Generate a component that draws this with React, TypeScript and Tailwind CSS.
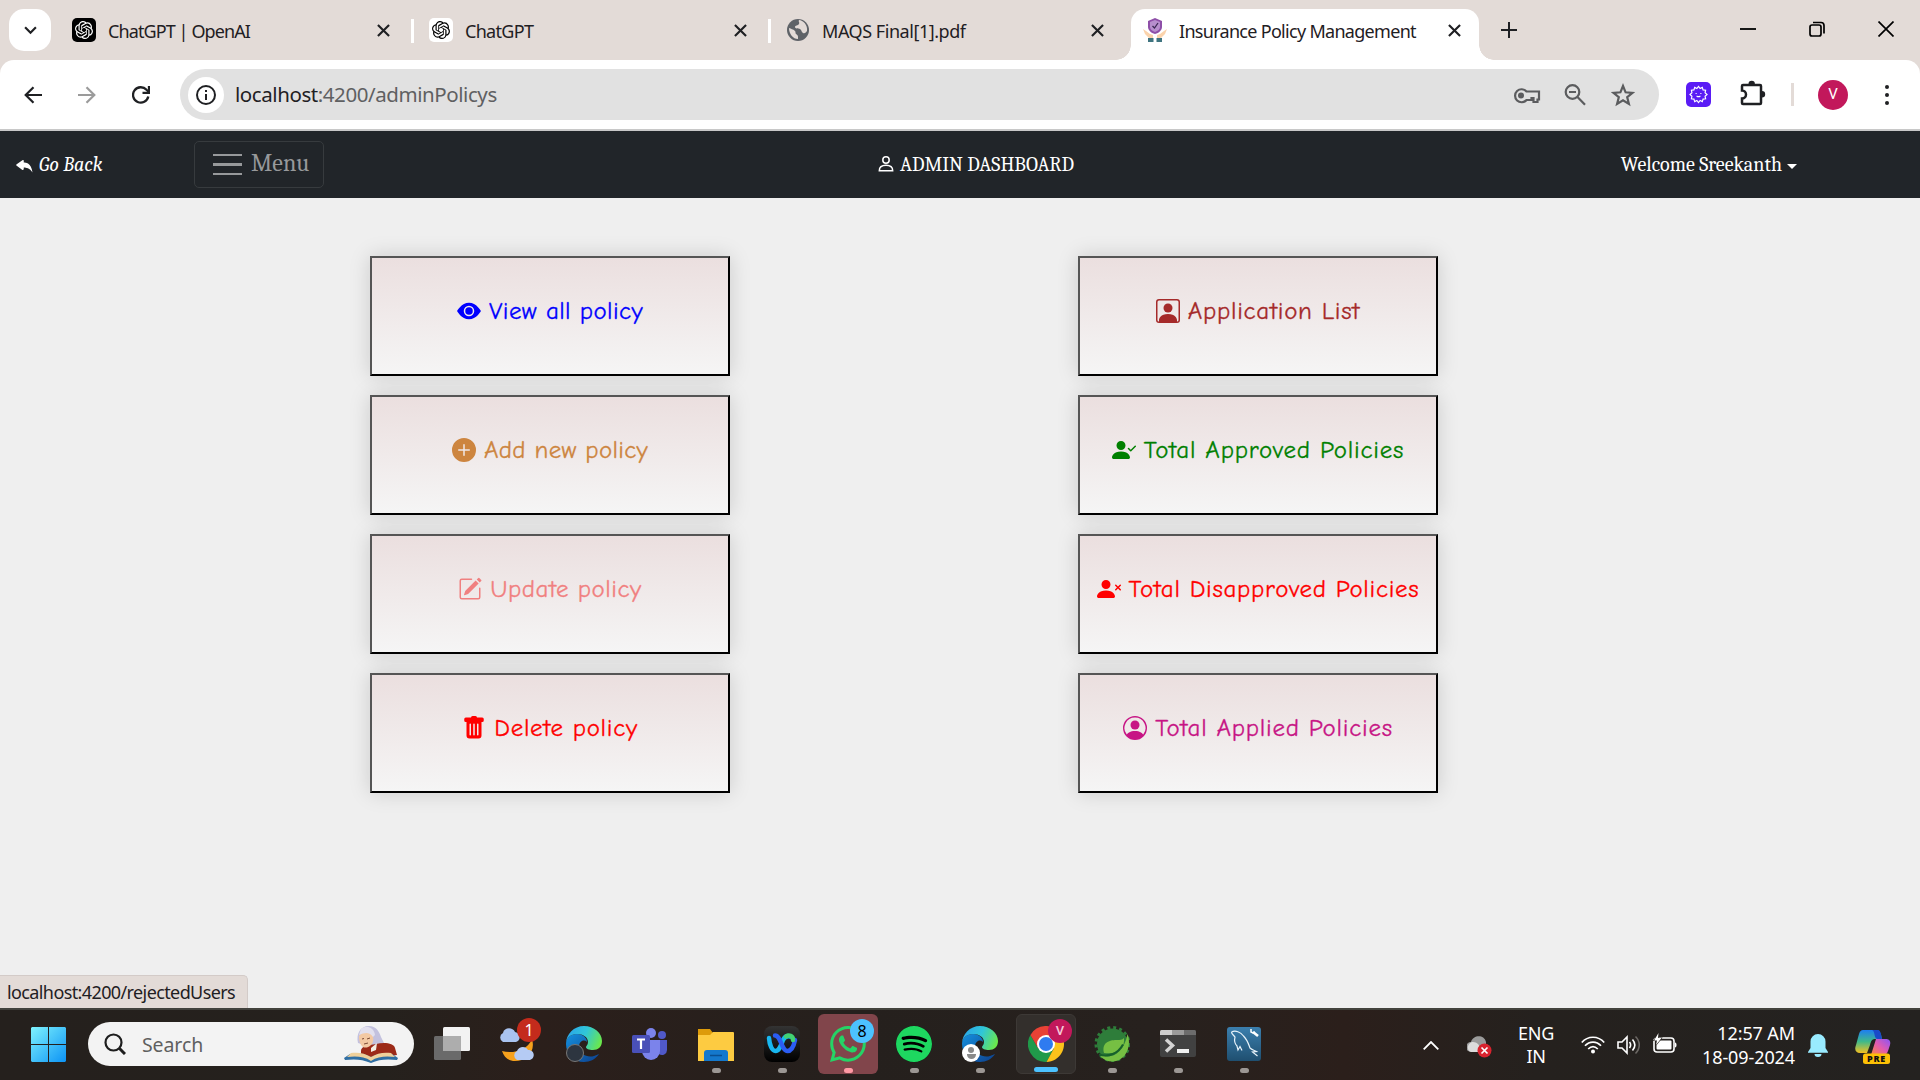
import React from "react";
import {
  BsEyeFill,
  BsPlusCircleFill,
  BsPencilSquare,
  BsTrashFill,
  BsPersonSquare,
  BsPersonCheckFill,
  BsPersonXFill,
  BsPersonCircle,
  BsReplyFill,
  BsWhatsapp,
} from "react-icons/bs";
import { SiOpenai, SiSpotify } from "react-icons/si";

type IconType = React.ComponentType<{ className?: string }>;

const UI = "font-['Noto_Sans','Open_Sans',sans-serif]";

/* ---------- Tab strip ---------- */

function CloseGlyph() {
  return (
    <svg viewBox="0 0 14 14" className="h-[13px] w-[13px]" fill="none" stroke="#1f2023" strokeWidth="2.3">
      <path d="M1 1l12 12M13 1L1 13" />
    </svg>
  );
}

function GlobeIcon() {
  return (
    <svg viewBox="0 0 24 24" className="h-6 w-6">
      <circle cx="12" cy="12" r="11" fill="#5f6368" />
      <path d="M3 10c2 1 4 1 6 3 1 1 0 2 1 3s2 1 2 3v2c-5 0-9-5-9-11z" fill="#e3dbd7" />
      <path d="M13 2c-1 2 1 2 0 4s-4 1-4 3 3 1 5 2 1 3 3 4 3-1 4-2c1-6-4-11-8-11z" fill="#e3dbd7" />
    </svg>
  );
}

function InsuranceIcon() {
  return (
    <svg viewBox="0 0 24 24" className="h-6 w-6">
      <path d="M12 0l7 3v6c0 3-3 6-7 7-4-1-7-4-7-7V3z" fill="#8e4fa8" />
      <path d="M12 2l5 2v5c0 2-2 4-5 5-3-1-5-3-5-5V4z" fill="#b78fcd" />
      <path d="M9.500 8l2 2 3.500-5" stroke="#3c2a55" strokeWidth="1.300" fill="none" />
      <path d="M0 11l3 2 4 3 3 1v3H6l-4-4zM24 11l-3 2-4 3-3 1v3h4l4-4z" fill="#fbd3ac" />
      <path d="M5 20h5.500v4H5zM13.500 20H19v4h-5.500z" fill="#3f7480" />
    </svg>
  );
}

function Tab({
  title,
  icon,
  active = false,
  separator = false,
  spacing,
}: {
  title: string;
  icon: React.ReactNode;
  active?: boolean;
  separator?: boolean;
  spacing: string;
}) {
  const shape = active ? "w-[348px] rounded-t-[14px] bg-white" : "w-[357px]";
  return (
    <div className={`relative flex h-[51px] shrink-0 items-start pt-[9px] pl-3 ${shape}`}>
      <div className="flex h-6 w-6 shrink-0 items-center justify-center">{icon}</div>
      <span className={`ml-3 w-[262px] text-[18px] leading-[27px] whitespace-nowrap text-[#1f2023] ${spacing}`}>{title}</span>
      <span className="mt-[6px] ml-[7px]">
        <CloseGlyph />
      </span>
      {separator && <span className="mt-[1px] ml-[21px] h-6 w-[3px] shrink-0 bg-white" />}
      {active && (
        <>
          <span className="absolute bottom-0 -left-[15px] h-[15px] w-[15px] bg-[radial-gradient(circle_at_0_0,#e3dbd7_14.500px,#ffffff_15px)]" />
          <span className="absolute -right-[15px] bottom-0 h-[15px] w-[15px] bg-[radial-gradient(circle_at_100%_0,#e3dbd7_14.500px,#ffffff_15px)]" />
        </>
      )}
    </div>
  );
}

function TabStrip() {
  return (
    <div className="flex h-[60px] bg-[#e3dbd7] pt-[9px]">
      <div className="ml-[9px] flex h-[42px] w-[42px] items-center justify-center rounded-[15px] bg-white">
        <svg viewBox="0 0 14 10" className="h-[9px] w-[13px]" fill="none" stroke="#1f2023" strokeWidth="2.400">
          <path d="M1 1.500l6 6 6-6" />
        </svg>
      </div>
      <div className="ml-[9px] flex">
        <Tab
          title="ChatGPT | OpenAI"
          separator
          spacing="tracking-[-0.9px]"
          icon={
            <span className="flex h-6 w-6 items-center justify-center rounded-[5px] bg-black text-white">
              <SiOpenai className="h-[18px] w-[18px]" />
            </span>
          }
        />
        <Tab
          title="ChatGPT"
          separator
          spacing="tracking-[-0.7px]"
          icon={
            <span className="flex h-6 w-6 items-center justify-center rounded-[5px] bg-white text-black">
              <SiOpenai className="h-[18px] w-[18px]" />
            </span>
          }
        />
        <Tab title="MAQS Final[1].pdf" spacing="tracking-[-0.45px]" icon={<GlobeIcon />} />
        <Tab title="Insurance Policy Management" active spacing="tracking-[-0.7px]" icon={<InsuranceIcon />} />
      </div>
      <svg viewBox="0 0 16 16" className="mt-[13px] ml-[22px] h-4 w-4" fill="none" stroke="#1f2023" strokeWidth="2">
        <path d="M8 0v16M0 8h16" />
      </svg>
      <div className="mt-3 ml-auto flex gap-[53px] pr-[26px]">
        <svg viewBox="0 0 16 16" className="h-4 w-4" stroke="#000" strokeWidth="1.800">
          <path d="M0 8h16" />
        </svg>
        <svg viewBox="0 0 16 16" className="h-4 w-4" fill="none" stroke="#000" strokeWidth="1.700">
          <rect x="1" y="4" width="11" height="11" rx="2" />
          <path d="M4 1.500h8a3 3 0 0 1 3 3v8" />
        </svg>
        <svg viewBox="0 0 16 16" className="h-4 w-4" fill="none" stroke="#000" strokeWidth="1.700">
          <path d="M.5.5l15 15M15.500.5l-15 15" />
        </svg>
      </div>
    </div>
  );
}

/* ---------- Address bar ---------- */

function Toolbar() {
  return (
    <div className="h-[71px] border-b-2 border-[#c8c8c8] bg-[#e3dbd7]">
      <div className="flex h-[69px] items-center rounded-t-[14px] bg-white">
        <svg viewBox="0 0 18 18" className="ml-6 h-[18px] w-[18px]" fill="none" stroke="#1f2023" strokeWidth="2.200">
          <path d="M18 9H2M9.500 1.200L1.700 9l7.800 7.800" />
        </svg>
        <svg viewBox="0 0 18 18" className="ml-9 h-[18px] w-[18px]" fill="none" stroke="#9b9b9b" strokeWidth="2.200">
          <path d="M0 9h16M8.500 1.200L16.300 9l-7.800 7.800" />
        </svg>
        <svg viewBox="0 0 18 18" className="ml-[36px] h-[18px] w-[18px]" fill="none" stroke="#1f2023" strokeWidth="2.300">
          <path d="M16.300 10.500A7.700 7.700 0 1 1 14.500 3.800L16.800 6" />
          <path d="M17 0v6.900h-6.500" />
        </svg>
        <div className="ml-[30px] flex h-[51px] w-[1479px] items-center rounded-full bg-[#e1e1e1] pl-2">
          <div className="flex h-9 w-9 items-center justify-center rounded-full bg-white">
            <svg viewBox="0 0 20 20" className="h-5 w-5" fill="none" stroke="#1f2023" strokeWidth="2">
              <circle cx="10" cy="10" r="9" />
              <path d="M10 9v6M10 5v2" />
            </svg>
          </div>
          <span className="ml-[11px] text-[20.500px] tracking-[-0.43px] whitespace-nowrap text-[#5f6062]">
            <span className="text-[#1f2023]">localhost</span>:4200/adminPolicys
          </span>
          <div className="mr-[24px] ml-auto flex items-center text-[#5b5c5e]">
            <svg viewBox="0 0 28 20" className="h-5 w-7" fill="none" stroke="currentColor" strokeWidth="2.200">
              <path d="M13.500 6.500H26v8h-1.500v2.500h-4V13h-2v2h-5a6.500 6.500 0 1 1 0-8.500z" />
              <circle cx="8" cy="10.500" r="3" fill="currentColor" stroke="none" />
            </svg>
            <svg viewBox="0 0 22 22" className="ml-[23px] h-[22px] w-[22px]" fill="none" stroke="currentColor" strokeWidth="2.200">
              <circle cx="8.500" cy="8" r="6.800" />
              <path d="M13.500 13l7.500 7.800M5 8h7" />
            </svg>
            <svg viewBox="0 0 24 24" className="ml-[25px] h-6 w-6" fill="none" stroke="currentColor" strokeWidth="2.200">
              <path d="M12 3l2.600 6.300 6.900.5-5.300 4.400 1.700 6.700-5.900-3.600-5.900 3.600 1.700-6.700-5.300-4.400 6.900-.5z" />
            </svg>
          </div>
        </div>
        <div className="ml-[27px] flex h-[25px] w-[25px] items-center justify-center rounded-[5px] bg-[#5a1cf5]">
          <svg viewBox="0 0 20 20" className="h-[19px] w-[19px]" fill="none" stroke="#fff" strokeWidth="1.200">
            <path d="M10 1.500l1.700 2.200L14 2.500l.8 2.700 2.700.3-.6 2.700 2.100 1.800-2.100 1.800.6 2.700-2.700.3-.8 2.700-2.300-1.200L10 18.500l-1.700-2.200L6 17.500l-.8-2.700-2.700-.3.600-2.700L1 10l2.100-1.800-.6-2.700 2.700-.3L6 2.500l2.300 1.200z" />
            <path d="M7.500 8.500v1M12.500 8.500v1M8 11.500q2 1.500 4 0" />
          </svg>
        </div>
        <svg viewBox="0 0 26 26" className="-mt-[3px] ml-[29px] h-[26px] w-[26px]" fill="none" stroke="#1f2023" strokeWidth="2.500">
          <path d="M3 5h17a1 1 0 0 1 1 1v17a1 1 0 0 1-1 1H3a1 1 0 0 1-1-1v-4.500a4 4 0 0 0 0-8V6a1 1 0 0 1 1-1z" />
          <path d="M8.500 4a3.200 3.200 0 0 1 6.400 0zM22 11a3.200 3.200 0 0 1 0 6.400z" fill="#1f2023" stroke="none" />
        </svg>
        <span className="ml-[25px] h-[23px] w-[3px] bg-[#e3dbd7]" />
        <span className="ml-[24px] flex h-[30px] w-[30px] items-center justify-center rounded-full bg-[#c2185b] font-[Roboto,sans-serif] text-[15px] text-white">
          V
        </span>
        <span className="ml-[37px] flex flex-col gap-1">
          <i className="h-1 w-1 rounded-full bg-[#1f2023]" />
          <i className="h-1 w-1 rounded-full bg-[#1f2023]" />
          <i className="h-1 w-1 rounded-full bg-[#1f2023]" />
        </span>
      </div>
    </div>
  );
}

/* ---------- Site ---------- */

function Navbar() {
  return (
    <nav className="flex h-[67px] items-center bg-[#212529] font-['Cambria','Caladea','Liberation_Serif',serif] text-[20px] whitespace-nowrap text-white">
      <a className="flex w-[194px] items-center pl-[15px] italic">
        <BsReplyFill className="h-5 w-5" />
        <span className="ml-1">Go Back</span>
      </a>
      <div className="flex h-[47px] w-[130px] items-center rounded-[5px] border border-[#373b3e] pl-[18px] text-[#97999b]">
        <span className="flex flex-col gap-[7px]">
          <i className="h-[2.500px] w-[29px] bg-current" />
          <i className="h-[2.500px] w-[29px] bg-current" />
          <i className="h-[2.500px] w-[29px] bg-current" />
        </span>
        <span className="-mt-[3px] ml-[9px] text-[24px]">Menu</span>
      </div>
      <div className="ml-[554px] flex items-center">
        <svg viewBox="0 0 16 16" className="-mt-[2px] h-4 w-4" fill="none" stroke="#fff" strokeWidth="1.500">
          <circle cx="8" cy="4" r="3.200" />
          <path d="M1.300 14.700c0-4 2-5.400 6.700-5.400s6.700 1.400 6.700 5.400z" />
        </svg>
        <span className="ml-[6px]">ADMIN DASHBOARD</span>
      </div>
      <div className="mr-[123px] ml-auto flex items-center">
        <span>Welcome Sreekanth</span>
        <i className="mt-1 ml-[5px] border-x-[5px] border-t-[5px] border-x-transparent border-t-white" />
      </div>
    </nav>
  );
}

function Card({ icon: Icon, label, tone, spacing }: { icon: IconType; label: string; tone: string; spacing: string }) {
  return (
    <button
      className={`flex h-[120px] w-[360px] items-center justify-center border-2 border-t-[#555] border-r-black border-b-black border-l-[#555] bg-linear-to-b from-[#ebdfdf] to-[#f5f5f5] pb-[10px] font-['Comic_Neue','Comic_Sans_MS',Lato,sans-serif] text-[25px] whitespace-nowrap shadow-[0_0_20px_rgba(0,0,0,0.15)] ${tone}`}
    >
      <Icon className="h-6 w-6 shrink-0" />
      <span className={`ml-2 [-webkit-text-stroke:0.3px] ${spacing}`}>{label}</span>
    </button>
  );
}

const leftCards = [
  { icon: BsEyeFill, label: "View all policy", tone: "text-[#0000ff]", spacing: "tracking-[0.4px]" },
  { icon: BsPlusCircleFill, label: "Add new policy", tone: "text-[#cd853f]", spacing: "tracking-[0.3px]" },
  { icon: BsPencilSquare, label: "Update policy", tone: "text-[#f08080]", spacing: "tracking-[0.5px]" },
  { icon: BsTrashFill, label: "Delete policy", tone: "text-[#ff0000]", spacing: "tracking-[0.7px]" },
];

const rightCards = [
  { icon: BsPersonSquare, label: "Application List", tone: "text-[#a52a2a]", spacing: "tracking-[0.7px]" },
  { icon: BsPersonCheckFill, label: "Total Approved Policies", tone: "text-[#008000]", spacing: "tracking-[0.78px]" },
  { icon: BsPersonXFill, label: "Total Disapproved Policies", tone: "text-[#ff0000]", spacing: "tracking-[0.7px]" },
  { icon: BsPersonCircle, label: "Total Applied Policies", tone: "text-[#c71585]", spacing: "tracking-[0.75px]" },
];

function Dashboard() {
  return (
    <main className="flex h-[810px] flex-col bg-[#efefef]">
      <div className="flex gap-[348px] pt-[58px] pl-[370px]">
        <div className="flex flex-col gap-[19px]">
          {leftCards.map((c) => (
            <Card key={c.label} {...c} />
          ))}
        </div>
        <div className="flex flex-col gap-[19px]">
          {rightCards.map((c) => (
            <Card key={c.label} {...c} />
          ))}
        </div>
      </div>
      <div className="mt-auto flex h-[33px] w-[248px] items-center rounded-tr-[5px] border-t border-r border-[#d3cbc8] bg-[#e3dbd7] pl-[7px] text-[18px] tracking-[-0.61px] whitespace-nowrap text-[#1f2023]">
        <span>localhost:4200/rejectedUsers</span>
      </div>
    </main>
  );
}

/* ---------- Taskbar ---------- */

function EdgeIcon({ id }: { id: string }) {
  return (
    <svg viewBox="0 0 36 36" className="h-9 w-9">
      <defs>
        <linearGradient id={`${id}-top`} x1="0" y1="0.300" x2="1" y2="0.600">
          <stop offset="0" stopColor="#2aa5ea" />
          <stop offset="0.500" stopColor="#30c6d8" />
          <stop offset="1" stopColor="#6be84a" />
        </linearGradient>
        <linearGradient id={`${id}-low`} x1="0" y1="0" x2="1" y2="1">
          <stop offset="0" stopColor="#1490df" />
          <stop offset="1" stopColor="#0d3f8c" />
        </linearGradient>
      </defs>
      <path d="M0 18C0 12 5 8 11 8c6 0 10 4 10 8-3-3-8-1-8 5 0 7 8 11 15 9 3-1 4-2 5-2-3 5-9 8-15 8C8 36 0 28 0 18z" fill={`url(#${id}-low)`} />
      <path d="M0 18C0 8 8 0 18 0s18 7 18 15c0 6-4 9-9 9-4 0-7-1-7-3 0-1 2-2 2-5 0-5-5-8-11-8S0 12 0 18z" fill={`url(#${id}-top)`} />
    </svg>
  );
}

function TaskViewIcon() {
  return (
    <svg viewBox="0 0 36 34" className="h-[34px] w-9">
      <rect x="9" y="0" width="27" height="24" rx="1.500" fill="#f2f2f2" />
      <rect x="0" y="9" width="27" height="24" rx="1.500" fill="#6a6a6a" />
      <rect x="9" y="9" width="18" height="15" fill="#adadad" />
    </svg>
  );
}

function WeatherIcon() {
  return (
    <svg viewBox="0 0 40 42" className="-mt-[2px] h-[42px] w-10">
      <path d="M34 17c4 13-6 22-17 22-7 0-11-4-13-10 10 3 25 0 30-12z" fill="#f6a11d" />
      <path d="M5 20a5 5 0 0 1 0-9c1-6 10-6 12-1 6 1 6 9 1 10z" fill="#a9c3f0" />
      <path d="M19 38a5 5 0 0 1 0-9c2-5 9-5 11-1 8 0 7 10 1 10z" fill="#b5cbf4" />
    </svg>
  );
}

function TeamsIcon() {
  return (
    <svg viewBox="0 0 36 32" className="h-8 w-9">
      <circle cx="30" cy="7" r="4" fill="#5059c9" />
      <circle cx="19" cy="5" r="5" fill="#7b83eb" />
      <path d="M27 12h8v10a5 5 0 0 1-8 4z" fill="#5059c9" />
      <path d="M10 12h18v11a9 9 0 0 1-18 0z" fill="#7b83eb" />
      <rect x="0" y="7" width="18" height="18" rx="1.500" fill="#4950b8" />
      <path d="M5 11.500h8M9 11.500V21" stroke="#fff" strokeWidth="2.200" />
    </svg>
  );
}

function FolderIcon() {
  return (
    <svg viewBox="0 0 36 33" className="mt-[1px] h-[33px] w-9">
      <path d="M0 1h12l3 4v5H0z" fill="#dd9b0a" />
      <path d="M0 7h12l3-3h20a1 1 0 0 1 1 1v28H0z" fill="#fdcb41" />
      <path d="M6 33v-8q0-3 3-3h18q3 0 3 3v8z" fill="#1478cc" />
      <path d="M12 27.500h12" stroke="#0a4f91" strokeWidth="1.500" />
    </svg>
  );
}

function WebexIcon() {
  return (
    <svg viewBox="0 0 36 36" className="h-9 w-9" fill="none" strokeWidth="4.500" strokeLinecap="round">
      <defs>
        <linearGradient id="webex-bg" x1="0" y1="0" x2="0" y2="1">
          <stop offset="0" stopColor="#333333" />
          <stop offset="1" stopColor="#000000" />
        </linearGradient>
      </defs>
      <rect width="36" height="36" rx="8" fill="url(#webex-bg)" />
      <path d="M5 12c.5 7 3 13 6.500 13 4 0 5.500-6 7.500-11 1.500-3 4-4.500 7-3.500" stroke="#18b7f0" />
      <path d="M11 9.500c6 0 6.500 15.500 12.500 15.500 4 0 6.500-6 7.500-11" stroke="#2b5df3" />
      <path d="M22 10.500c3-2 7-1 7 3.500" stroke="#41d273" />
    </svg>
  );
}

function ChromeIcon() {
  return (
    <svg viewBox="0 0 36 36" className="h-9 w-9">
      <path d="M2.400 9A18 18 0 0 0 18.500 36l7.300-13.500H10.200z" fill="#209a4a" />
      <path d="M18.500 36A18 18 0 0 0 33.600 9H18v9l7.800 4.500z" fill="#fcc21b" />
      <path d="M2.400 9A18 18 0 0 1 33.600 9H18L10 22z" fill="#e94235" />
      <circle cx="18" cy="18" r="9" fill="#fff" />
      <circle cx="18" cy="18" r="7" fill="#2f7bf0" />
    </svg>
  );
}

function SpringIcon() {
  return (
    <svg viewBox="0 0 36 36" className="h-9 w-9">
      <circle cx="18.500" cy="18" r="15.500" fill="#2e7d3a" />
      <circle cx="18.500" cy="18" r="16.500" fill="none" stroke="#2e7d3a" strokeWidth="3" strokeDasharray="3 3" />
      <path d="M33.500 8C38 20 32 35 18.500 35.500c-5 0-9-2-12-5l2-1C18 33 30 27 33.500 8z" fill="#76bf43" />
      <path d="M30 12c1 10-6 17-20 15-3-12 8-13 13-13 3 0 5 0 7-2z" fill="#76bf43" />
      <path d="M5 28.500c10 3 19-1 24-10" stroke="#17612b" strokeWidth="2" fill="none" />
    </svg>
  );
}

function TerminalIcon() {
  return (
    <svg viewBox="0 0 36 28" className="h-7 w-9">
      <rect width="36" height="27" rx="2" fill="#414141" />
      <path d="M0 5V1.500Q0 0 1.500 0H12v5z" fill="#cfcfcf" />
      <path d="M12 0h12v5H12z" fill="#9b9b9b" />
      <path d="M24 0h10.500Q36 0 36 1.500V5H24z" fill="#6c6c6c" />
      <path d="M6 9.500l6.500 6L6 21.500" stroke="#d4d4d4" strokeWidth="3.500" fill="none" />
      <rect x="17" y="19" width="12" height="4" fill="#f0f0f0" />
    </svg>
  );
}

function WorkbenchIcon() {
  return (
    <svg viewBox="0 0 34 34" className="h-[34px] w-[34px]" fill="none">
      <defs>
        <linearGradient id="wb-bg" x1="0" y1="0" x2="0" y2="1">
          <stop offset="0" stopColor="#3b7fae" />
          <stop offset="1" stopColor="#1f4f70" />
        </linearGradient>
      </defs>
      <rect width="34" height="34" rx="3" fill="url(#wb-bg)" />
      <path
        d="M4.500 5c4-2 9 0 12 4 4 4 5 8 6.500 12 2 2 4 2 6.500 3.500l-4 .5 5 4M4.500 5c0 2 2 3 3.500 5-1 4 0 7 2 9l1 4 2-3.500 2 4"
        stroke="#e8f3fa"
        strokeWidth="1.200"
      />
      <path d="M26 5l5 4" stroke="#fff" strokeWidth="2.600" />
      <path d="M24 2v3l2 1 2-1" stroke="#fff" strokeWidth="1.500" />
    </svg>
  );
}

function StartIcon() {
  return (
    <svg viewBox="0 0 35 35" className="h-[35px] w-[35px]">
      <defs>
        <linearGradient id="start-fill" x1="0" y1="0" x2="35" y2="35" gradientUnits="userSpaceOnUse">
          <stop offset="0" stopColor="#7ff3fd" />
          <stop offset="1" stopColor="#0c93f5" />
        </linearGradient>
      </defs>
      <path d="M1 0h16v17H0V1zM18 0h16l1 1v16H18zM0 18h17v17H1l-1-1zM18 18h17v16l-1 1H18z" fill="url(#start-fill)" />
    </svg>
  );
}

function ReaderIcon() {
  return (
    <svg viewBox="0 0 54 38" className="h-[38px] w-[54px]">
      <path d="M14 18c-2-9 2-17 11-17 7 0 10 5 12 11l3 6-14 4z" fill="#c3c1de" />
      <path d="M17 26c0-5 7-6 15-7 8-2 18-1 19 4l2 7-26 4-10-2z" fill="#9c2a18" />
      <path d="M15 11c3-4 8-6 12-3 3 3 3 9 0 12-3 3-6 3-8 2-3-2-4-7-4-11z" fill="#f3c9a4" />
      <path d="M17 4c5-4 13-2 14 6l-2 2c-3-5-8-5-14-2z" fill="#e2e0ee" />
      <path d="M18 14l2-.5M23 14l3-1M20 19l4-1" stroke="#7b4a35" strokeWidth="1" />
      <path d="M27 23l6-5-1 7-5 2z" fill="#f4eee4" />
      <path d="M0 33l6-4c8-1 15-1 21 3 6-4 14-4 21-3l6 4-1 2c-9-1-18-1-26 3-9-4-17-4-26-3z" fill="#2f6ea3" />
      <path d="M3 32l4-4c7-1 14 0 20 4 6-4 13-5 20-4l4 4c-8-1-17-1-24 4-7-5-16-5-24-4z" fill="#efd09a" />
    </svg>
  );
}

function TaskItem({
  children,
  indicator = "",
  frame = "",
  badge,
}: {
  children: React.ReactNode;
  indicator?: string;
  frame?: string;
  badge?: React.ReactNode;
}) {
  return (
    <div className="flex w-[66px] justify-center">
      <div className={`relative flex h-[60px] w-[60px] items-center justify-center rounded-[6px] ${frame}`}>
        {children}
        {badge}
        {indicator && <span className={`absolute bottom-[1px] h-[5px] rounded-full ${indicator}`} />}
      </div>
    </div>
  );
}

const idle = "w-[9px] bg-[#9c9794]";

function Tray() {
  return (
    <div className="mr-[29px] ml-auto flex items-center text-[18px] leading-6 text-white">
      <svg viewBox="0 0 16 9" className="h-[9px] w-4" fill="none" stroke="#fff" strokeWidth="1.800">
        <path d="M.7 8.300L8 1l7.300 7.300" />
      </svg>
      <svg viewBox="0 0 25 22" className="mt-1 ml-[28px] h-[22px] w-[25px]">
        <path d="M4 16a5 5 0 0 1 0-10c2-7 13-8 15 0v10z" fill="#9b9b9b" />
        <path d="M2 15c-3-4 0-9 4-9 4 0 6 3 7 5v5H4z" fill="#dcdcdc" />
        <circle cx="17.500" cy="14.500" r="7" fill="#d9232e" />
        <path d="M14.500 11.500l6 6M20.500 11.500l-6 6" stroke="#fff" strokeWidth="1.700" />
      </svg>
      <div className="ml-[24px] w-[40px] text-center leading-[23px] tracking-[-0.3px]">
        ENG
        <br />
        IN
      </div>
      <svg viewBox="0 0 24 18" className="ml-[25px] h-[18px] w-6" fill="none" stroke="#fff" strokeWidth="1.700">
        <path d="M.8 6.500c6-7 16.400-7 22.400 0M4 9.800c4.500-5 11.500-5 16 0M7.200 13c3-3 6.600-3 9.600 0" />
        <circle cx="12" cy="15.500" r="2" fill="#fff" stroke="none" />
      </svg>
      <svg viewBox="0 0 24 20" className="ml-3 h-5 w-6" fill="none" stroke="#fff" strokeWidth="1.600">
        <path d="M1 7h4l5-5v16l-5-5H1zM12.500 7c1.500 2 1.500 4 0 6M15.500 4.500c3 3.500 3 7.500 0 11" />
        <path d="M18.500 1.500c5 5 5 12 0 17" stroke="#6b6764" />
      </svg>
      <svg viewBox="0 0 24 20" className="-mt-1 ml-3 h-5 w-6">
        <rect x="1" y="5" width="20" height="14" rx="3" fill="none" stroke="#fff" strokeWidth="1.600" />
        <rect x="3.500" y="7.500" width="15" height="9" rx="1" fill="#fff" />
        <path d="M22 9.500c2 0 2 5 0 5z" fill="#fff" />
        <path d="M5.500 0L1 7.500h3L3 12l5.500-7H5z" fill="#fff" stroke="#25201d" strokeWidth="1.200" paintOrder="stroke" />
      </svg>
      <div className="ml-[25px] w-[93px] text-right tracking-[-0.1px] whitespace-nowrap">
        12:57 AM
        <br />
        18-09-2024
      </div>
      <svg viewBox="0 0 20 23" className="ml-[13px] h-[23px] w-5">
        <path d="M10 0a7.500 7.500 0 0 1 7.500 7.500V14l2.500 4v.8H0V18l2.500-4V7.500A7.500 7.500 0 0 1 10 0zM6.500 20h7a3.500 3 0 0 1-7 0z" fill="#99ebff" />
      </svg>
      <svg viewBox="0 0 36 34" className="mt-1 ml-[27px] h-[34px] w-9">
        <defs>
          <linearGradient id="cp-a" x1="0" y1="0" x2="0" y2="1">
            <stop offset="0" stopColor="#1d7df2" />
            <stop offset="0.500" stopColor="#3fb98a" />
            <stop offset="1" stopColor="#f4c020" />
          </linearGradient>
          <linearGradient id="cp-b" x1="1" y1="0" x2="0" y2="1">
            <stop offset="0" stopColor="#8a55f5" />
            <stop offset="0.500" stopColor="#e25bb0" />
            <stop offset="1" stopColor="#fb8a3c" />
          </linearGradient>
        </defs>
        <path d="M8 0h14c3 0 4 4 5 9h-7c-3 0-4 2-5 6l-3 8H5c-4 0-6-3-4-8L4 4c1-3 2-4 4-4z" fill="url(#cp-a)" />
        <path d="M17 0h6c2 0 3 3 4 9h-5c-3 0-2-9-5-9z" fill="#1a49c8" />
        <path d="M21 9h10c3 0 5 2 4 6l-2 6c-1 3-3 4-5 4H16z" fill="url(#cp-b)" />
        <rect x="8" y="23.500" width="27" height="10.500" rx="2.500" fill="#fdc106" />
        <text x="21.500" y="32" textAnchor="middle" fontSize="9" fontWeight="800" letterSpacing="0.800" fontFamily="Open Sans, sans-serif" fill="#111">
          PRE
        </text>
      </svg>
    </div>
  );
}

function Taskbar() {
  return (
    <div className="flex h-[72px] items-center border-t-2 border-[#42423d] bg-[linear-gradient(90deg,#25201d,#25211d_20%,#2b1f1b_28%,#25201d_45%,#27211e_60%,#2b1f1b_70%,#25211e_80%,#242220)]">
      <div className="-mt-0.5 ml-[31px]">
        <StartIcon />
      </div>
      <div className="-mt-0.5 ml-[22px] flex h-11 w-[326px] items-center rounded-full bg-[#f3f3f3] pl-4">
        <svg viewBox="0 0 22 22" className="h-[22px] w-[22px]" fill="none" stroke="#1e1e1e" strokeWidth="2.200">
          <circle cx="9.500" cy="9.500" r="8" />
          <path d="M15.500 15.500l5.500 5.500" strokeWidth="3" />
        </svg>
        <span className="mt-[2px] ml-[16px] text-[19.500px] tracking-[-0.1px] text-[#5f5f5f]">Search</span>
        <span className="mr-[16px] ml-auto">
          <ReaderIcon />
        </span>
      </div>
      <div className="-mt-[2px] ml-[5px] flex">
        <TaskItem>
          <TaskViewIcon />
        </TaskItem>
        <TaskItem
          badge={
            <span className="absolute top-[4px] right-[7px] flex h-6 w-6 items-center justify-center rounded-full bg-[#c42b1c] text-[16px] text-white">
              1
            </span>
          }
        >
          <WeatherIcon />
        </TaskItem>
        <TaskItem badge={<span className="absolute bottom-[12px] left-[12px] h-[18px] w-[18px] rounded-full border border-[#777] bg-[#2d3540]" />}>
          <EdgeIcon id="edge-one" />
        </TaskItem>
        <TaskItem>
          <TeamsIcon />
        </TaskItem>
        <TaskItem indicator={idle}>
          <FolderIcon />
        </TaskItem>
        <TaskItem indicator={idle}>
          <WebexIcon />
        </TaskItem>
        <TaskItem
          frame="bg-[#81454b]"
          indicator="w-[9px] bg-[#ff99a4]"
          badge={
            <span className="absolute top-[5px] right-[4px] flex h-6 w-6 items-center justify-center rounded-full bg-[#4cc2ff] text-[16px] text-black">
              8
            </span>
          }
        >
          <BsWhatsapp className="h-9 w-9 text-[#25d366]" />
        </TaskItem>
        <TaskItem indicator={idle}>
          <span className="rounded-full bg-black">
            <SiSpotify className="h-9 w-9 text-[#1ed760]" />
          </span>
        </TaskItem>
        <TaskItem
          indicator={idle}
          badge={
            <span className="absolute bottom-[12px] left-[12px] flex h-[18px] w-[18px] flex-col items-center justify-center gap-[1px] rounded-full bg-white">
              <i className="h-[6px] w-[6px] rounded-full bg-[#8a8a8a]" />
              <i className="h-[5px] w-[9px] rounded-b-full bg-[#8a8a8a]" />
            </span>
          }
        >
          <EdgeIcon id="edge-two" />
        </TaskItem>
        <TaskItem
          frame="bg-[#332f2c] border border-[#3d3936]"
          indicator="w-6 bg-[#4cc2ff]"
          badge={
            <span className="absolute top-[4px] right-[3px] flex h-6 w-6 items-center justify-center rounded-full bg-[#c2185b] font-[Roboto,sans-serif] text-[13px] font-medium text-[#f5c9d8]">
              V
            </span>
          }
        >
          <ChromeIcon />
        </TaskItem>
        <TaskItem indicator={idle}>
          <SpringIcon />
        </TaskItem>
        <TaskItem indicator={idle}>
          <TerminalIcon />
        </TaskItem>
        <TaskItem indicator={idle}>
          <WorkbenchIcon />
        </TaskItem>
      </div>
      <Tray />
    </div>
  );
}

export default function App() {
  return (
    <div className={`flex h-[1080px] w-[1920px] flex-col overflow-hidden bg-[#efefef] ${UI}`}>
      <TabStrip />
      <Toolbar />
      <Navbar />
      <Dashboard />
      <Taskbar />
    </div>
  );
}
